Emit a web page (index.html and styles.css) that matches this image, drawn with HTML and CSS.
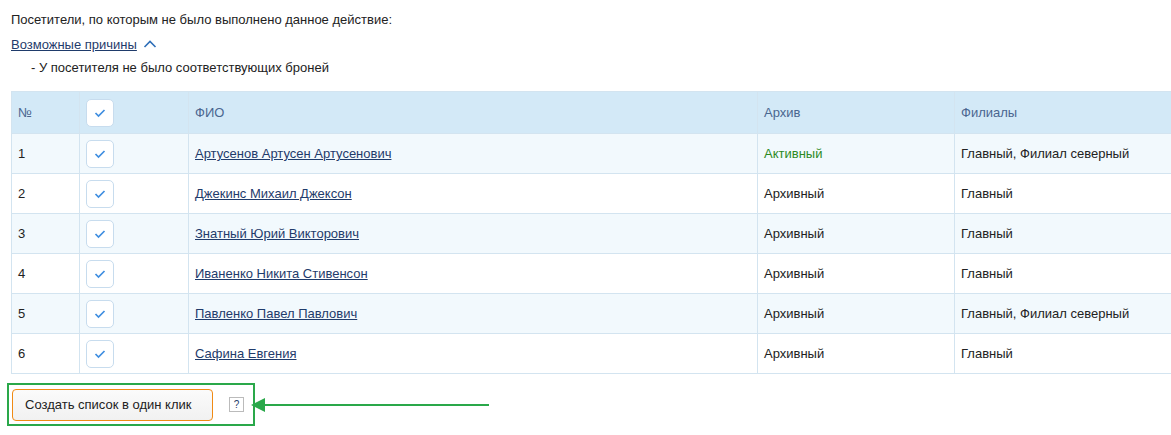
FILE: index.html
```html
<!DOCTYPE html>
<html lang="ru">
<head>
    <meta charset="UTF-8">
    <title>Посетители</title>
    <link rel="stylesheet" href="styles.css">
</head>
<body>
    <div class="page">
        <p class="intro">Посетители, по которым не было выполнено данное действие:</p>
        <div class="reasons">
            <a href="#" class="reasons-link">Возможные причины</a>
            <svg class="chevron" width="14" height="10" viewBox="0 0 14 10"><path d="M1.5 8 L7 2.5 L12.5 8" fill="none" stroke="#2f6fb8" stroke-width="1.6"/></svg>
        </div>
        <p class="reason-item">- У посетителя не было соответствующих броней</p>

        <table class="visitors">
            <thead>
                <tr>
                    <th class="col-num">№</th>
                    <th class="col-check"><span class="check"><svg width="12" height="10" viewBox="0 0 12 10"><path d="M1.5 5 L4.5 8 L10.5 2" fill="none" stroke="#3f8ee0" stroke-width="1.7"/></svg></span></th>
                    <th class="col-name">ФИО</th>
                    <th class="col-archive">Архив</th>
                    <th>Филиалы</th>
                </tr>
            </thead>
            <tbody>
                <tr>
                    <td>1</td>
                    <td><span class="check"><svg width="12" height="10" viewBox="0 0 12 10"><path d="M1.5 5 L4.5 8 L10.5 2" fill="none" stroke="#3f8ee0" stroke-width="1.7"/></svg></span></td>
                    <td><a href="#">Артусенов Артусен Артусенович</a></td>
                    <td class="active">Активный</td>
                    <td>Главный, Филиал северный</td>
                </tr>
                <tr>
                    <td>2</td>
                    <td><span class="check"><svg width="12" height="10" viewBox="0 0 12 10"><path d="M1.5 5 L4.5 8 L10.5 2" fill="none" stroke="#3f8ee0" stroke-width="1.7"/></svg></span></td>
                    <td><a href="#">Джекинс Михаил Джексон</a></td>
                    <td>Архивный</td>
                    <td>Главный</td>
                </tr>
                <tr>
                    <td>3</td>
                    <td><span class="check"><svg width="12" height="10" viewBox="0 0 12 10"><path d="M1.5 5 L4.5 8 L10.5 2" fill="none" stroke="#3f8ee0" stroke-width="1.7"/></svg></span></td>
                    <td><a href="#">Знатный Юрий Викторович</a></td>
                    <td>Архивный</td>
                    <td>Главный</td>
                </tr>
                <tr>
                    <td>4</td>
                    <td><span class="check"><svg width="12" height="10" viewBox="0 0 12 10"><path d="M1.5 5 L4.5 8 L10.5 2" fill="none" stroke="#3f8ee0" stroke-width="1.7"/></svg></span></td>
                    <td><a href="#">Иваненко Никита Стивенсон</a></td>
                    <td>Архивный</td>
                    <td>Главный</td>
                </tr>
                <tr>
                    <td>5</td>
                    <td><span class="check"><svg width="12" height="10" viewBox="0 0 12 10"><path d="M1.5 5 L4.5 8 L10.5 2" fill="none" stroke="#3f8ee0" stroke-width="1.7"/></svg></span></td>
                    <td><a href="#">Павленко Павел Павлович</a></td>
                    <td>Архивный</td>
                    <td>Главный, Филиал северный</td>
                </tr>
                <tr>
                    <td>6</td>
                    <td><span class="check"><svg width="12" height="10" viewBox="0 0 12 10"><path d="M1.5 5 L4.5 8 L10.5 2" fill="none" stroke="#3f8ee0" stroke-width="1.7"/></svg></span></td>
                    <td><a href="#">Сафина Евгения</a></td>
                    <td>Архивный</td>
                    <td>Главный</td>
                </tr>
            </tbody>
        </table>

        <div class="actions">
            <div class="highlight">
                <button class="btn">Создать список в один клик</button>
                <span class="help">?</span>
            </div>
            <svg class="arrow" width="240" height="16" viewBox="0 0 240 16"><path d="M0 8 L14 1 L14 15 Z" fill="#2aa84a"/><path d="M12 8 L238 8" stroke="#2aa84a" stroke-width="2"/></svg>
        </div>
    </div>
</body>
</html>
```

FILE: styles.css
```css
* {
    box-sizing: border-box;
}

body {
    margin: 0;
    overflow: hidden;
    font-family: 'Liberation Sans', Arial, sans-serif;
    font-size: 13px;
    color: #222;
    background: #fff;
}

.page {
    padding: 11px 0 0 11px;
}

.intro {
    margin: 0;
    line-height: 18px;
}

.reasons {
    display: flex;
    align-items: center;
    gap: 6px;
    margin-top: 7px;
    line-height: 18px;
}

.reasons-link {
    color: #1f3b6b;
}

.chevron {
    margin-top: -2px;
}

.reason-item {
    margin: 5px 0 0 20px;
    line-height: 18px;
}

.visitors {
    width: 1180px;
    margin-top: 14px;
    border-collapse: collapse;
    table-layout: fixed;
}

.visitors th,
.visitors td {
    border: 1px solid #d3e4f0;
    padding: 0 6px;
    text-align: left;
    font-weight: normal;
    height: 40px;
}

.visitors th {
    background: #d3e9f7;
    color: #4a6690;
    height: 42px;
}

.visitors tbody tr:nth-child(odd) td {
    background: #f2f9fd;
}

.col-num { width: 68px; }
.col-check { width: 109px; }
.col-name { width: 569px; }
.col-archive { width: 197px; }

.visitors a {
    color: #1f3b6b;
}

.visitors .active {
    color: #2c8a1f;
}

.check {
    display: flex;
    align-items: center;
    justify-content: center;
    width: 28px;
    height: 28px;
    border: 1px solid #c7dcee;
    border-radius: 5px;
    background: #fff;
}

.actions {
    display: flex;
    align-items: center;
    margin: 9px 0 0 -4px;
}

.highlight {
    display: flex;
    align-items: center;
    width: 248px;
    height: 43px;
    border: 2px solid #2aa84a;
    padding: 0 0 0 3px;
}

.btn {
    width: 201px;
    height: 32px;
    border: 1px solid #f08a14;
    border-radius: 4px;
    background: linear-gradient(#fbfbfb, #f1f1f1);
    font-family: 'Liberation Sans', Arial, sans-serif;
    font-size: 13px;
    color: #222;
    text-align: left;
    padding: 0 0 0 12px;
}

.help {
    width: 15px;
    height: 15px;
    margin-left: 16px;
    border: 1px solid #bbb;
    font-size: 10px;
    line-height: 13px;
    text-align: center;
    color: #1f3b6b;
}

.arrow {
    margin-left: -4px;
}
```
